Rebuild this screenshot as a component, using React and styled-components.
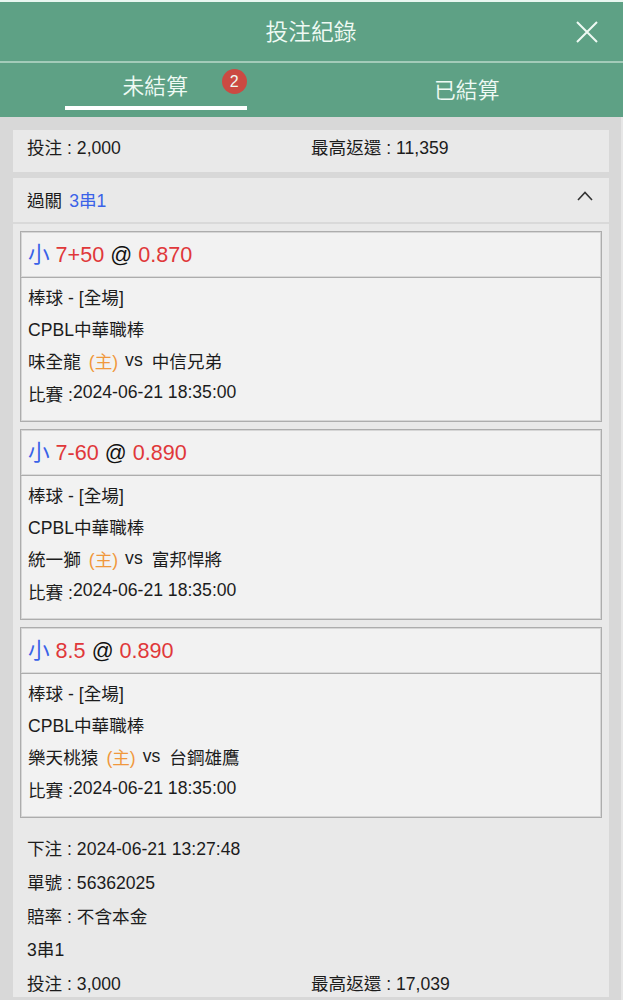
import React, { useState } from 'react'
import styled, { createGlobalStyle } from 'styled-components'

const GlobalStyle = createGlobalStyle`
    * {
        box-sizing: border-box;
    }
    body {
        margin: 0;
        background-color: #d8d8d8;
        font-family: "Liberation Sans", "Noto Sans CJK TC", sans-serif;
        font-size: 17.6px;
        color: #1c1c1c;
    }
`;

const Page = styled.div`
    width: 100%;
    height: 1000px;
    overflow: hidden;
    display: flex;
    flex-direction: column;
    border-top: 2px solid #e9f7f0;
`;

const Header = styled.header`
    height: 61px;
    flex-shrink: 0;
    display: grid;
    grid-template-columns: 72px 1fr 72px;
    align-items: center;
    justify-items: center;
    background-color: #5ea185;
    border-bottom: 2px solid #a3cbb9;
    color: #effaf4;
`;

const Title = styled.h1`
    grid-column: 2;
    margin: 0;
    padding: 2px 1px 0 0;
    font-size: 22.8px;
    font-weight: 350;
    line-height: 57px;
`;

const CloseButton = styled.button`
    width: 22px;
    height: 22px;
    padding: 0;
    border: none;
    background: transparent;
    color: inherit;
    cursor: pointer;

    svg {
        display: block;
    }
`;

const Tabs = styled.nav`
    height: 54px;
    flex-shrink: 0;
    display: grid;
    grid-template-columns: 1fr 1fr;
    justify-items: center;
    background-color: #5ea185;
`;

const Tab = styled.button`
    width: 182px;
    height: 47px;
    position: relative;
    padding: ${props => props.$active ? "3px 1px 0 0" : "11px 1px 0 0"};
    border: none;
    border-bottom: 4px solid ${props => props.$active ? "#ffffff" : "transparent"};
    background: transparent;
    color: #effaf4;
    font-family: inherit;
    font-size: 21.8px;
    font-weight: 350;
    line-height: ${props => props.$active ? "42px" : "34px"};
    cursor: pointer;
`;

const Badge = styled.span`
    position: absolute;
    top: 6px;
    right: 0;
    width: 25px;
    height: 25px;
    border-radius: 50%;
    background-color: #cb4a42;
    font-size: 16px;
    font-weight: 400;
    line-height: 25px;
    text-align: center;
`;

const List = styled.main`
    flex: 1;
    display: flex;
    flex-direction: column;
    gap: 6px;
    padding: 13px 12px 4px 13px;
    border-right: 2px solid #e6e6e6;
`;

const Card = styled.section`
    background-color: #e9e9e9;
`;

const CardHeader = styled.div`
    height: 46px;
    display: flex;
    justify-content: space-between;
    padding: 0 16px 0 14px;
    border-bottom: 2px solid #d9d9d9;
    line-height: 46px;
    cursor: pointer;

    svg {
        margin-top: 13px;
        transform: ${props => props.$open ? "none" : "rotate(180deg)"};
    }
`;

const Series = styled.span`
    margin-left: 7px;
    color: #3a62e8;
`;

const Leg = styled.article`
    height: 191px;
    margin: 7px 7px 0;
    border: 1px solid #adadad;
    background-color: #f2f2f2;
    box-shadow: inset 0 0 0 1px #d6d6d6;
`;

const Odds = styled.div`
    height: 46px;
    padding: 0 7px;
    border-bottom: 1px solid #adadad;
    box-shadow: inset 0 -1px 0 #dadada;
    color: #111111;
    font-size: 21.6px;
    line-height: 45px;
    white-space: pre;
`;

const Blue = styled.span`
    color: #3a62e8;
`;

const Red = styled.span`
    color: #e0383a;
`;

const LegBody = styled.div`
    padding: 4px 7px;
`;

const Line = styled.div`
    height: 32px;
    display: flex;
    line-height: ${props => props.$lead || "32px"};
    white-space: pre;
`;

const Home = styled.span`
    margin: 0 7px 0 8px;
    color: #f0983c;
`;

// latin text sits a little higher than the characters next to it
const Raised = styled.span`
    height: 28px;
    line-height: 29px;
`;

const Away = styled.span`
    margin-left: 9px;
`;

const Summary = styled.div`
    padding: 14px 0 0;
`;

const Row = styled.div`
    height: ${props => props.$height || "33.8px"};
    display: grid;
    grid-template-columns: 284px 1fr;
    padding-left: 14px;
    line-height: ${props => props.$lead || "34px"};
    white-space: pre;
`;

const legs = [
    { line: "7+50", odds: "0.870", home: "味全龍", away: "中信兄弟" },
    { line: "7-60", odds: "0.890", home: "統一獅", away: "富邦悍將" },
    { line: "8.5", odds: "0.890", home: "樂天桃猿", away: "台鋼雄鷹" },
];

const LegItem = ({ leg }) => (
    <Leg>
        <Odds>
            <Blue>小</Blue> <Red>{leg.line}</Red> @ <Red>{leg.odds}</Red>
        </Odds>
        <LegBody>
            <Line>棒球 - [全場]</Line>
            <Line>CPBL中華職棒</Line>
            <Line $lead="33px">
                <span>{leg.home}</span>
                <Home>(主)</Home>
                <Raised>vs</Raised>
                <Away>{leg.away}</Away>
            </Line>
            <Line $lead="34px">
                <span>比賽 :</span>
                <Raised>2024-06-21 18:35:00</Raised>
            </Line>
        </LegBody>
    </Leg>
)

const App = () => {

    const [tab, setTab] = useState("open");
    const [open, setOpen] = useState(true);

    return (
        <Page>
            <GlobalStyle />
            <Header>
                <Title>投注紀錄</Title>
                <CloseButton aria-label="close">
                    <svg width="22" height="22" viewBox="0 0 22 22" fill="none" stroke="currentColor" strokeWidth="2">
                        <path d="M1 1L21 21M21 1L1 21" />
                    </svg>
                </CloseButton>
            </Header>
            <Tabs>
                <Tab $active={tab === "open"} onClick={() => setTab("open")}>
                    未結算
                    <Badge>2</Badge>
                </Tab>
                <Tab $active={tab === "settled"} onClick={() => setTab("settled")}>已結算</Tab>
            </Tabs>
            <List>
                <Card>
                    <Row $height="42px" $lead="36px">
                        <span>投注 : 2,000</span>
                        <span>最高返還 : 11,359</span>
                    </Row>
                </Card>
                <Card>
                    <CardHeader $open={open} onClick={() => setOpen(!open)}>
                        <div>過關<Series>3串1</Series></div>
                        <svg width="16" height="10" viewBox="0 0 16 10" fill="none" stroke="#333333" strokeWidth="1.6">
                            <path d="M1 9L8 1.5L15 9" />
                        </svg>
                    </CardHeader>
                    {open && legs.map((leg) => (
                        <LegItem key={leg.home} leg={leg} />
                    ))}
                    <Summary>
                        <Row>下注 : 2024-06-21 13:27:48</Row>
                        <Row>單號 : 56362025</Row>
                        <Row>賠率 : 不含本金</Row>
                        <Row>3串1</Row>
                        <Row $height="30px">
                            <span>投注 : 3,000</span>
                            <span>最高返還 : 17,039</span>
                        </Row>
                    </Summary>
                </Card>
            </List>
        </Page>
    )
}

export default App
